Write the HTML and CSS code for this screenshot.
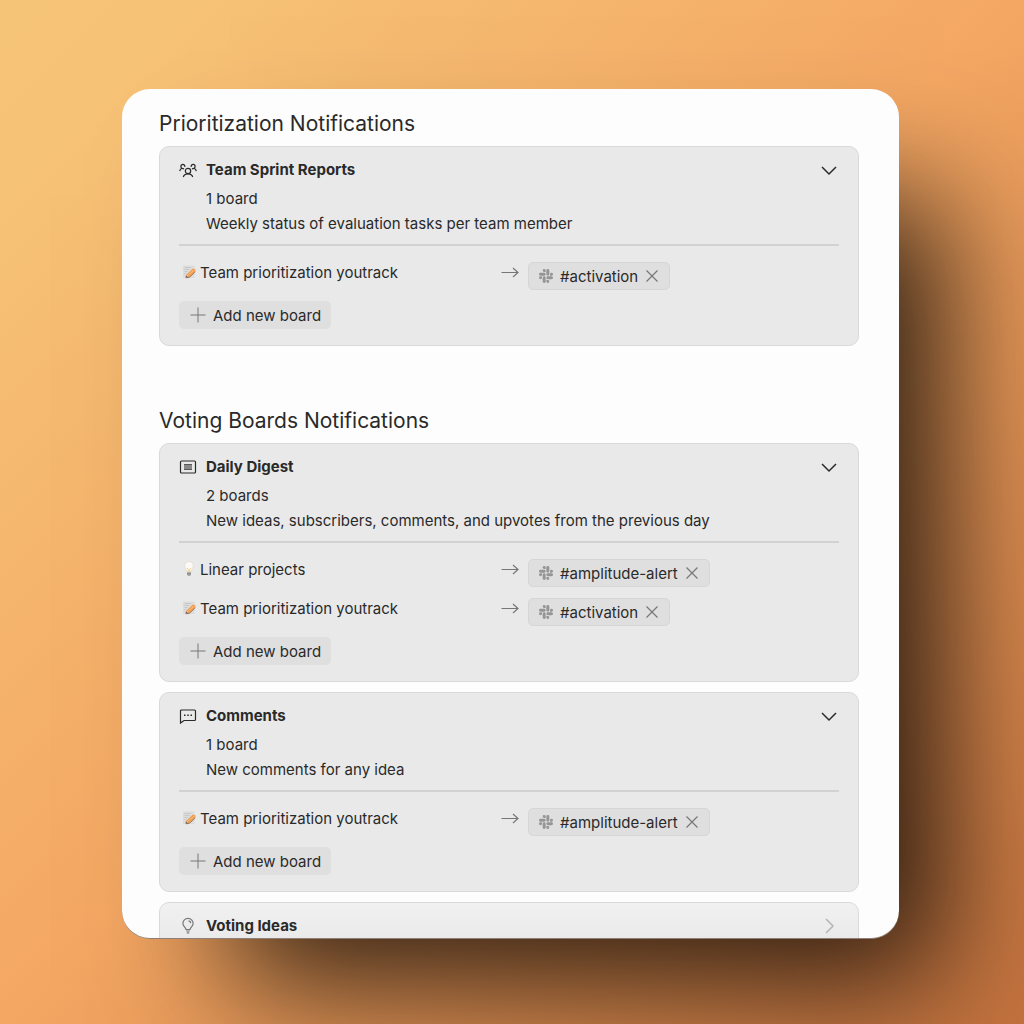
FILE: index.html
```html
<!DOCTYPE html>
<html lang="en">
<head>
  <meta charset="UTF-8">
  <meta name="viewport" content="width=device-width, initial-scale=1.0">
  <title>Notifications</title>
  <link rel="stylesheet" href="styles.css">
</head>
<body>
  <!-- shared icons -->
  <svg class="sprite" aria-hidden="true">
    <symbol id="chevron" viewBox="0 0 18 18"><path d="M2 6 9 13 16 6"/></symbol>
    <symbol id="arrow" viewBox="0 0 18 18"><path d="M0.500 9.500H17M12 5 17 9.500 12 14"/></symbol>
    <symbol id="plus" viewBox="0 0 16 16"><path d="M8 0.500V15.500M0.500 8H15.500"/></symbol>
    <symbol id="close" viewBox="0 0 12 12"><path d="M0.500 0.500 11.500 11.500M11.500 0.500 0.500 11.500"/></symbol>
    <symbol id="slack" viewBox="0 0 122 122">
      <path d="M26 77a13 13 0 1 1-13-13h13zM32 77a13 13 0 0 1 26 0v32a13 13 0 0 1-26 0z"/>
      <path d="M45 26a13 13 0 1 1 13-13v13zM45 32a13 13 0 0 1 0 26H13a13 13 0 0 1 0-26z"/>
      <path d="M96 45a13 13 0 1 1 13 13H96zM90 45a13 13 0 0 1-26 0V13a13 13 0 0 1 26 0z"/>
      <path d="M77 96a13 13 0 1 1-13 13V96zM77 90a13 13 0 0 1 0-26h32a13 13 0 0 1 0 26z"/>
    </symbol>
    <symbol id="memo" viewBox="0 0 14 14">
      <path d="M1 0.500H12.500V13H1z" fill="#dcdcdc"/>
      <path d="M2.500 2.500H9M2.500 4.500H7.500M2.500 6.500H5.500M2.500 8.500H4" stroke="#c3c3c3" stroke-width="0.800"/>
      <path d="M3.500 12.800 4 10 6.500 12.500z" fill="#7c6a5d"/>
      <path d="M4 10 11 3.400 13.500 4.300 13.300 6.500 6.800 12.500z" fill="#ef9b4b"/>
      <path d="M5 11 12.800 4.500" stroke="#f9c184"/>
      <path d="M4 12.800 7.500 12.300 13.200 7" stroke="#8c6a50" stroke-width="0.800" fill="none"/>
    </symbol>
    <symbol id="bulb-emoji" viewBox="0 0 14 16">
      <path d="M7 0.500a4.200 4.200 0 0 0-4.200 4.300c0 2.500 1.700 3.300 2 6h4.400c.3-2.700 2-3.500 2-6A4.200 4.200 0 0 0 7 0.500z" fill="#fbfaf6" stroke="#e0d9c9" stroke-width="0.700"/>
      <path d="M5.200 7 6.300 8.500V11M8.800 7 7.700 8.500V11" fill="none" stroke="#efc66f" stroke-width="0.800"/>
      <path d="M5 11.200h4v2.300L8 15H6l-1-1.500z" fill="#a7a7a5"/>
      <path d="M5 12.600h4" stroke="#777" stroke-width="0.700"/>
    </symbol>
  </svg>

  <main class="panel">
    <section class="section">
      <h2>Prioritization Notifications</h2>
      <article class="card">
        <header class="card-head">
          <svg class="icon" viewBox="0 0 18 18">
            <circle cx="9" cy="10" r="2.700"/>
            <path d="M4.300 16C4.800 14 6.700 12.800 9 12.800s4.200 1.200 4.700 3.200M6 5.800C5.800 4.300 5 3.400 3.900 3.400 2.700 3.400 1.900 4.300 1.900 5.400c0 .9.400 1.500 1.100 1.900C1.600 7.800.9 8.600.7 10.100M3 7.400c.8 0 1.500.2 2 .600M12 5.800c.2-1.500 1-2.400 2.100-2.400 1.200 0 2 .9 2 2 0 .9-.4 1.500-1.100 1.900 1.400.5 2.100 1.300 2.300 2.800M15 7.400c-.8 0-1.500.2-2 .600"/>
          </svg>
          <h3>Team Sprint Reports</h3>
          <button class="toggle" aria-label="Collapse"><svg><use href="#chevron"/></svg></button>
        </header>
        <div class="card-info">
          <p>1 board</p>
          <p>Weekly status of evaluation tasks per team member</p>
        </div>
        <div class="card-body">
          <div class="row">
            <span class="board"><svg><use href="#memo"/></svg>Team prioritization youtrack</span>
            <svg class="arrow"><use href="#arrow"/></svg>
            <span class="chip"><svg class="slack"><use href="#slack"/></svg>#activation<button class="remove" aria-label="Remove"><svg><use href="#close"/></svg></button></span>
          </div>
          <button class="add"><svg><use href="#plus"/></svg>Add new board</button>
        </div>
      </article>
    </section>

    <section class="section">
      <h2>Voting Boards Notifications</h2>
      <article class="card">
        <header class="card-head">
          <svg class="icon" viewBox="0 0 18 18">
            <rect x="1.500" y="3" width="15" height="12" rx="1"/>
            <path d="M5 6.800H13M5 9H13M5 11.200H13"/>
          </svg>
          <h3>Daily Digest</h3>
          <button class="toggle" aria-label="Collapse"><svg><use href="#chevron"/></svg></button>
        </header>
        <div class="card-info">
          <p>2 boards</p>
          <p>New ideas, subscribers, comments, and upvotes from the previous day</p>
        </div>
        <div class="card-body">
          <div class="row">
            <span class="board"><svg><use href="#bulb-emoji"/></svg>Linear projects</span>
            <svg class="arrow"><use href="#arrow"/></svg>
            <span class="chip"><svg class="slack"><use href="#slack"/></svg>#amplitude-alert<button class="remove" aria-label="Remove"><svg><use href="#close"/></svg></button></span>
          </div>
          <div class="row">
            <span class="board"><svg><use href="#memo"/></svg>Team prioritization youtrack</span>
            <svg class="arrow"><use href="#arrow"/></svg>
            <span class="chip"><svg class="slack"><use href="#slack"/></svg>#activation<button class="remove" aria-label="Remove"><svg><use href="#close"/></svg></button></span>
          </div>
          <button class="add"><svg><use href="#plus"/></svg>Add new board</button>
        </div>
      </article>

      <article class="card">
        <header class="card-head">
          <svg class="icon" viewBox="0 0 18 18">
            <path d="M2.500 3H15.500a1 1 0 0 1 1 1V12.500a1 1 0 0 1-1 1H5L1.500 16V4a1 1 0 0 1 1-1z"/>
            <path d="M5 8.300H6.500M8.300 8.300H9.800M11.500 8.300H13" stroke-width="1.600"/>
          </svg>
          <h3>Comments</h3>
          <button class="toggle" aria-label="Collapse"><svg><use href="#chevron"/></svg></button>
        </header>
        <div class="card-info">
          <p>1 board</p>
          <p>New comments for any idea</p>
        </div>
        <div class="card-body">
          <div class="row">
            <span class="board"><svg><use href="#memo"/></svg>Team prioritization youtrack</span>
            <svg class="arrow"><use href="#arrow"/></svg>
            <span class="chip"><svg class="slack"><use href="#slack"/></svg>#amplitude-alert<button class="remove" aria-label="Remove"><svg><use href="#close"/></svg></button></span>
          </div>
          <button class="add"><svg><use href="#plus"/></svg>Add new board</button>
        </div>
      </article>

      <article class="card closed">
        <header class="card-head">
          <svg class="icon" viewBox="0 0 18 18">
            <path d="M7 12.500C7 10.500 3.900 9.500 3.900 6.500a5.100 5.100 0 0 1 10.200 0c0 3-3.100 4-3.100 6zM7.200 14H10.800M7.800 15.800H10.200M9.500 3.800a2.500 2.500 0 0 1 2.300 2.300"/>
          </svg>
          <h3>Voting Ideas</h3>
          <button class="toggle" aria-label="Expand"><svg><use href="#chevron"/></svg></button>
        </header>
      </article>
    </section>
  </main>
</body>
</html>
```

FILE: styles.css
```css
* {
  box-sizing: border-box;
}
body {
  margin: 0;
  height: 100vh;
  padding: 89px 125px 85px 122px;
  display: flex;
  overflow: hidden;
  background: linear-gradient(135deg, #f6c477 0%, #f6c276 10%, #f4a763 50%, #c5733e 100%);
  color: #2a2a2a;
  font-family: Inter, "Liberation Sans", sans-serif;
  font-size: 15px;
}
h2, h3, p {
  margin: 0;
}
svg {
  flex: none;
  fill: none;
  stroke: currentColor;
}
button {
  border: none;
  padding: 0;
  background: none;
  color: inherit;
  font: inherit;
  cursor: pointer;
}
.sprite {
  display: none;
}
.panel {
  flex: 1;
  overflow: hidden;
  padding: 20px 40px 0 37px;
  background: #fdfdfd;
  border-radius: 28px;
  border-bottom: 1px solid #8c8078;
  box-shadow: 76px 76px 120px -32px rgba(0, 0, 0, 0.8);
}
.section {
  margin-bottom: 60px;
}
h2 {
  margin-bottom: 7px;
  font-size: 21px;
  font-weight: 400;
  line-height: 30px;
}
.card {
  margin-bottom: 10px;
  padding: 11px 19px 16px;
  background: #e9e9e9;
  border: 1px solid #d9d9d9;
  border-radius: 10px;
}
.card-head {
  display: flex;
  align-items: center;
  height: 24px;
}
.icon {
  width: 18px;
  height: 18px;
  margin-right: 9px;
  stroke-width: 1.2;
}
h3 {
  flex: 1;
  font-size: 15px;
  font-weight: 700;
  line-height: 24px;
}
.toggle {
  display: flex;
  margin-right: 1px;
}
.toggle svg {
  width: 18px;
  height: 18px;
  stroke-width: 1.5;
}
.card-info {
  margin-top: 4px;
  padding: 0 0 8px 27px;
  border-bottom: 2px solid #d2d2d2;
  line-height: 25px;
}
.card-body {
  display: flex;
  flex-direction: column;
  align-items: flex-start;
  gap: 11px;
  padding-top: 16px;
}
.row {
  display: grid;
  grid-template-columns: 322px 27px 1fr;
  width: 100%;
}
.board {
  display: flex;
  align-items: center;
  height: 20px;
  padding-left: 3px;
}
.board svg {
  width: 14px;
  height: 16px;
  margin-right: 4px;
  stroke: none;
}
.arrow {
  width: 18px;
  height: 20px;
  color: #777;
  stroke-width: 1.2;
}
.chip {
  display: flex;
  align-items: center;
  justify-self: start;
  height: 28px;
  padding: 0 11px 0 10px;
  background: #dfdfdf;
  border: 1px solid #d6d6d6;
  border-radius: 5px;
}
.slack {
  width: 14px;
  height: 14px;
  margin-right: 7px;
  fill: #959595;
  stroke: none;
}
.remove {
  display: flex;
  margin-left: 8px;
  color: #777;
}
.remove svg {
  width: 12px;
  height: 12px;
  stroke-width: 1.2;
}
.add {
  display: flex;
  align-items: center;
  height: 28px;
  padding: 0 10px 0 11px;
  background: #dfdfdf;
  border-radius: 5px;
}
.add svg {
  width: 16px;
  height: 16px;
  margin-right: 7px;
  color: #777;
}
.closed {
  background: linear-gradient(#f1f1f1, #e7e7e7);
}
.closed .icon {
  color: #777;
}
.closed .toggle {
  color: #b5b5b5;
}
.closed .toggle svg {
  transform: rotate(-90deg);
}
```
